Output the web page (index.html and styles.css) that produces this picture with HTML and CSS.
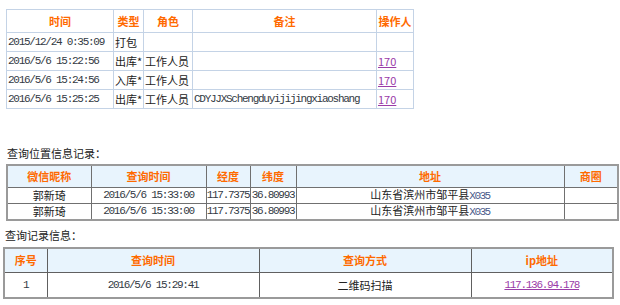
FILE: index.html
```html
<!DOCTYPE html>
<html lang="zh-CN">
<head>
<meta charset="utf-8">
<title>记录</title>
<link rel="stylesheet" href="styles.css">
</head>
<body>
<div class="page">
  <table class="t1">
    <colgroup>
      <col class="c1a"><col class="c1b"><col class="c1c"><col class="c1d"><col class="c1e">
    </colgroup>
    <tr class="hd"><th>时间</th><th>类型</th><th>角色</th><th>备注</th><th>操作人</th></tr>
    <tr><td class="mono">2015/12/24 0:35:09</td><td>打包</td><td></td><td></td><td></td></tr>
    <tr><td class="mono">2016/5/6 15:22:56</td><td>出库*</td><td>工作人员</td><td></td><td><a href="#">170</a></td></tr>
    <tr><td class="mono">2016/5/6 15:24:56</td><td>入库*</td><td>工作人员</td><td></td><td><a href="#">170</a></td></tr>
    <tr><td class="mono">2016/5/6 15:25:25</td><td>出库*</td><td>工作人员</td><td class="mono">CDYJJXSchengduyijijingxiaoshang</td><td><a href="#">170</a></td></tr>
  </table>

  <div class="title t-pos">查询位置信息记录：</div>
  <table class="t2">
    <colgroup>
      <col class="c2a"><col class="c2b"><col class="c2c"><col class="c2d"><col class="c2e"><col class="c2f">
    </colgroup>
    <tr class="hd"><th>微信昵称</th><th>查询时间</th><th>经度</th><th>纬度</th><th>地址</th><th>商圈</th></tr>
    <tr><td>郭新琦</td><td class="mono">2016/5/6 15:33:00</td><td class="mono">117.7375</td><td class="mono">36.80993</td><td>山东省滨州市邹平县<span class="mono x">X035</span></td><td></td></tr>
    <tr><td>郭新琦</td><td class="mono">2016/5/6 15:33:00</td><td class="mono">117.7375</td><td class="mono">36.80993</td><td>山东省滨州市邹平县<span class="mono x">X035</span></td><td></td></tr>
  </table>

  <div class="title t-rec">查询记录信息：</div>
  <table class="t3">
    <colgroup>
      <col class="c3a"><col class="c3b"><col class="c3c"><col class="c3d">
    </colgroup>
    <tr class="hd"><th>序号</th><th>查询时间</th><th>查询方式</th><th>ip地址</th></tr>
    <tr><td class="mono">1</td><td class="mono">2016/5/6 15:29:41</td><td>二维码扫描</td><td class="mono"><a href="#">117.136.94.178</a></td></tr>
  </table>
</div>
</body>
</html>
```

FILE: styles.css
```css
html, body {
  margin: 0;
  padding: 0;
  background: #ffffff;
}
.page {
  display: flex;
  flex-direction: column;
  align-items: flex-start;
  font-family: "Noto Sans CJK SC", "Noto Sans", sans-serif;
  font-size: 11px;
  line-height: 13px;
  color: #222;
}
table {
  border-collapse: collapse;
  table-layout: fixed;
}
th {
  color: #ff6a00;
  font-weight: bold;
  font-size: 11px;
  line-height: 13px;
  padding: 0;
  text-align: center;
}
td {
  padding: 0;
  line-height: 13px;
  white-space: nowrap;
  overflow: hidden;
}
.mono {
  font-family: "Liberation Mono", "DejaVu Sans Mono", monospace;
  font-size: 11px;
  letter-spacing: -1.27px;
  color: #333a44;
}
a {
  color: #9a3ca8;
  text-decoration: underline;
}

/* table 1 */
.t1 {
  margin: 9px 0 0 6px;
  width: 408px;
  border: 1px solid #c4d3e6;
}
.t1 th, .t1 td {
  border: 1px solid #c4d3e6;
}
.t1 th { height: 22px; }
.t1 td { height: 18px; text-align: left; padding-left: 1px; }
.c1a { width: 107px; }
.c1b { width: 30px; }
.c1c { width: 49px; }
.c1d { width: 184px; }
.c1e { width: 37px; }

.title {
  font-size: 11px;
  line-height: 16px;
  color: #222;
  margin-left: 7px;
}
.t-pos { margin-top: 36px; }
.t-rec { margin-top: 6px; margin-left: 5px; }

/* table 2 */
.t2 {
  margin: 3px 0 0 6px;
  width: 612px;
  border: 2px solid #9a9a9a;
}
.t2 th, .t2 td {
  border: 1px solid #707070;
  text-align: center;
}
.t2 .hd th { background: #e8f4fd; height: 21px; }
.t2 td { height: 14px; }
.c2a { width: 84px; }
.c2b { width: 115px; }
.c2c { width: 44px; }
.c2d { width: 46px; }
.c2e { width: 268px; }
.c2f { width: 54px; }
.x { letter-spacing: -1.5px; color: #4a5a8a; }

/* table 3 */
.t3 {
  margin: 4px 0 0 3px;
  width: 609px;
  border: 2px solid #9a9a9a;
}
.t3 th, .t3 td {
  border: 1px solid #606060;
  text-align: center;
}
.t3 .hd th { background: #e8f4fd; height: 23px; }
.t3 td { height: 24px; }
.c3a { width: 43px; }
.c3b { width: 212px; }
.c3c { width: 212px; }
.c3d { width: 142px; }
```
